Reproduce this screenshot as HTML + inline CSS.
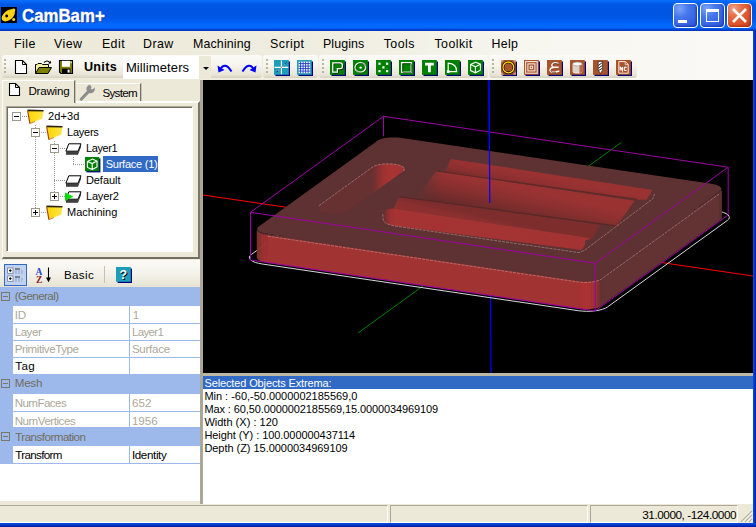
<!DOCTYPE html>
<html lang="en">
<head>
<meta charset="utf-8">
<title>CamBam+</title>
<style>
html,body{margin:0;padding:0}
body{width:756px;height:527px;position:relative;overflow:hidden;background:#ece9d8;
 font-family:"Liberation Sans",sans-serif;font-size:11px;color:#000}
.abs{position:absolute}
div,span{box-sizing:border-box}
.t{position:absolute;white-space:nowrap;line-height:1}
/* ---------- title bar ---------- */
#title{left:0;top:0;width:756px;height:31px;
 background:linear-gradient(to bottom,#0b6ffc 0%,#0869f8 5%,#035eec 10%,#0057e3 15%,#0056e2 40%,#0058e8 60%,#0060f3 70%,#0268fc 79%,#0267fa 89%,#0055e4 93%,#003ccc 96.5%,#0031bc 100%)}
#title .cap{left:22px;top:7px;font-size:18.2px;font-weight:bold;color:#fff;transform:scaleX(0.925);transform-origin:0 0;text-shadow:1px 1px 0 #0b2c8c;-webkit-text-stroke:0.35px #fff}
.cbtn{position:absolute;top:3px;width:25px;height:25px;border:1px solid #fff;border-radius:4px;background:radial-gradient(circle at 25% 20%,#7ea4f7 0%,#4577ec 35%,#3562e2 70%,#2a50d2 100%);box-shadow:inset -1px -1px 2px rgba(10,30,140,.55)}
.cbtn.close{background:radial-gradient(circle at 25% 20%,#f2a288 0%,#e46840 35%,#dc5028 70%,#c23a18 100%);box-shadow:inset -1px -1px 2px rgba(120,20,0,.5)}
/* ---------- menu ---------- */
#menu{left:0;top:31px;width:756px;height:24px;background:linear-gradient(to right,#ece9d8 0%,#efede0 40%,#f8f7f1 75%,#faf9f5 100%)}
#menu .t{top:7px;font-size:12.4px}
/* ---------- toolbar ---------- */
#tbrow{left:0;top:55px;width:756px;height:25px;background:linear-gradient(to right,#ece9d8 0%,#efede0 40%,#f8f7f1 75%,#faf9f5 100%)}
.strip{position:absolute;top:0;height:23px;border-radius:3px 3px 3px 3px;
 background:linear-gradient(to bottom,#fbfaf7 0%,#f6f4ec 45%,#e9e6d8 85%,#d6d2c0 100%)}
.grip{position:absolute;top:4px;width:2px;height:14px;
 background:repeating-linear-gradient(to bottom,#b9b5a3 0,#b9b5a3 2px,transparent 2px,transparent 4px)}
/* ---------- left panel ---------- */
#left{left:0;top:80px;width:200px;height:424px;background:#ece9d8}

/* tabs */
.tab{position:absolute;background:#ece9d8;border-top:1px solid #fff;border-right:1px solid #716f64;box-shadow:1px 0 0 #c9c5b3}
#tabpage{position:absolute;left:2px;top:21px;width:198px;height:158px;border-top:2px solid #fff;border-left:1px solid #fff;border-right:2px solid #7a776a;border-bottom:2px solid #716f64;background:#ece9d8}
#tree{position:absolute;left:6px;top:26px;width:187px;height:146px;background:#fff;border:1px solid;border-color:#aca899 #fff #fff #aca899;box-shadow:inset 1px 1px 0 #716f64}
#tree .t{font-size:11px}
.pm{position:absolute;width:9px;height:9px;border:1px solid #9d9a8b;background:#fff}
.pm:before{content:"";position:absolute;left:1px;top:3px;width:5px;height:1px;background:#000}
.pm.plus:after{content:"";position:absolute;left:3px;top:1px;width:1px;height:5px;background:#000}
.dv{position:absolute;width:1px;background:repeating-linear-gradient(to bottom,#9a9a9a 0,#9a9a9a 1px,transparent 1px,transparent 2px)}
.dh{position:absolute;height:1px;background:repeating-linear-gradient(to right,#9a9a9a 0,#9a9a9a 1px,transparent 1px,transparent 2px)}
/* property grid */
#pgtb{position:absolute;left:0;top:180px;width:200px;height:27px;background:linear-gradient(to bottom,#fbfaf7 0%,#f4f2ea 50%,#e6e3d3 100%)}
#pg{position:absolute;left:0;top:207px;width:200px;height:214px;background:#fff}
.cat{position:absolute;left:0;width:200px;background:#9db9eb}
.cat .t{left:15px;top:3px;font-size:11.6px;color:#706d5c}
.pmc{position:absolute;left:1px;top:5px;width:9px;height:9px;border:1px solid #7b7768}
.pmc:before{content:"";position:absolute;left:1px;top:3px;width:5px;height:1px;background:#7b7768}
.row{position:absolute;left:0;width:200px;background:#fff;border-left:13px solid #9db9eb;border-bottom:1px solid #9db9eb}
.row:after{content:"";position:absolute;left:116px;top:0;bottom:0;width:1px;background:#9db9eb}
.row .t{top:3px;font-size:11.6px}
.row .n{left:2px}.row .v{left:119px}
.row.dis .t{color:#aca899}
/* ---------- viewport ---------- */
#vsplit{left:200px;top:80px;width:3px;height:424px;background:#aaa698}
#view{left:203px;top:80px;width:550px;height:293px;background:#000;overflow:hidden}
#hsplit{left:203px;top:373px;width:550px;height:3px;background:#bcb8a6}
#info{left:203px;top:376px;width:550px;height:128px;background:#fff;font-size:11px}
#info .hd{position:absolute;left:0;top:0.4px;width:550px;height:12.4px;background:#316ac5}
#info .t{}
/* ---------- status ---------- */
#status{left:0;top:504px;width:756px;height:19px;background:#ece9d8}
.sp{position:absolute;top:1px;height:18px;border-top:1px solid #aca899;border-left:1px solid #aca899;border-right:1px solid #fff;border-bottom:1px solid #fff}
#bborder{left:0;top:523px;width:756px;height:4px;background:linear-gradient(to bottom,#0a4fe0,#0034c8 50%,#001e9c)}
#rborder{left:753px;top:31px;width:3px;height:492px;background:linear-gradient(to right,#0a4fe0,#0034c8 60%,#001e9c)}
</style>
</head>
<body>
<!-- TITLE -->
<div id="title" class="abs">
 <svg class="abs" style="left:1px;top:7px" width="16" height="16" viewBox="0 0 16 16"><rect width="16" height="16" fill="#000"/><ellipse cx="7.2" cy="8.4" rx="7.6" ry="4.6" transform="rotate(-40 7.2 8.4)" fill="#f7d417"/><path d="M9,3.4Q12.6,0.6 14.2,2.2Q14.6,5.4 11,8Z" fill="#f7d417"/><circle cx="5.7" cy="9" r="1.4" fill="#000"/><circle cx="12.7" cy="12.5" r="1.5" fill="#f7d417"/></svg>
 <div class="t cap">CamBam+</div>
 <div class="cbtn" style="left:673px"><div class="abs" style="left:4px;top:16px;width:9px;height:3px;background:#fff"></div></div>
 <div class="cbtn" style="left:700px"><div class="abs" style="left:5px;top:5px;width:13px;height:13px;border:1px solid #fff;border-top-width:3px"></div></div>
 <div class="cbtn close" style="left:727px"><svg class="abs" style="left:3px;top:3px" width="17" height="17" viewBox="0 0 17 17"><path d="M2,2L15,15M15,2L2,15" stroke="#fff" stroke-width="2.6"/></svg></div>
</div>
<!-- MENU -->
<div id="menu" class="abs">
 <span class="t" style="left:14.0px;letter-spacing:0.44px">File</span>
 <span class="t" style="left:54.0px;letter-spacing:0.45px">View</span>
 <span class="t" style="left:101.9px;letter-spacing:0.45px">Edit</span>
 <span class="t" style="left:143.0px;letter-spacing:0.45px">Draw</span>
 <span class="t" style="left:193.0px;letter-spacing:0.15px">Machining</span>
 <span class="t" style="left:270.1px;letter-spacing:0.45px">Script</span>
 <span class="t" style="left:323.0px;letter-spacing:0.11px">Plugins</span>
 <span class="t" style="left:383.7px;letter-spacing:0.45px">Tools</span>
 <span class="t" style="left:434.4px;letter-spacing:0.45px">Toolkit</span>
 <span class="t" style="left:491.5px;letter-spacing:0.27px">Help</span>
</div>
<!-- TOOLBAR -->
<div id="tbrow" class="abs">
 <div class="strip" style="left:2px;width:260px"></div>
 <div class="strip" style="left:263px;width:55px"></div>
 <div class="strip" style="left:319px;width:169px"></div>
 <div class="strip" style="left:489px;width:148px"></div>
 <div class="grip" style="left:4px"></div><div class="grip" style="left:266px"></div><div class="grip" style="left:322px"></div><div class="grip" style="left:492px"></div>
 <svg class="abs" style="left:14px;top:4px" width="14" height="16" viewBox="0 0 14 16"><path d="M1.5,1.5H8.5L12.5,5.5V14.5H1.5Z" fill="#fff" stroke="#000" stroke-width="1.1"/><path d="M8.5,1.5V5.5H12.5" fill="none" stroke="#000" stroke-width="1"/></svg>
 <svg class="abs" style="left:34px;top:3px" width="19" height="17" viewBox="0 0 19 17"><path d="M1.5,15.5V6.5H3L4,5.5H7.5L8.5,6.5H14.5V9" fill="#f2f0a0" stroke="#000" stroke-width="1"/><path d="M1.5,15.5L5,9.5H17.5L14,15.5Z" fill="#808000" stroke="#000" stroke-width="1"/><path d="M10,4.5Q13.5,1.5 16,4.8" fill="none" stroke="#000" stroke-width="1.1"/><path d="M14.2,5.6H17V2.8Z" fill="#000"/></svg>
 <svg class="abs" style="left:58px;top:4px" width="16" height="16" viewBox="0 0 16 16"><path d="M1.5,1.5H14.5V14.5H3L1.5,13Z" fill="#808000" stroke="#000" stroke-width="1.1"/><rect x="4" y="1.8" width="8" height="6" fill="#fff"/><rect x="4" y="9.6" width="8.4" height="4.8" fill="#000"/><rect x="9.6" y="10.6" width="2" height="3" fill="#fff"/><rect x="12.6" y="2.6" width="1.2" height="1.6" fill="#fff"/></svg>
 <span class="t" style="left:83.9px;top:6px;font-size:12.6px;font-weight:bold;letter-spacing:0.33px">Units</span>
 <div class="abs" style="left:123px;top:1px;width:76px;height:23px;background:#fff"></div>
 <span class="t" style="left:125.9px;top:6px;font-size:13px;letter-spacing:0.11px">Millimeters</span>
 <div class="abs" style="left:199px;top:1px;width:12px;height:23px;background:#ece9d8"></div>
 <div class="abs" style="left:203px;top:12px;width:0;height:0;border-left:3px solid transparent;border-right:3px solid transparent;border-top:3px solid #000"></div>
 <svg class="abs" style="left:216px;top:7px" width="18" height="12" viewBox="0 0 18 12"><path d="M4,7.5Q9,-1 15.5,9.5" fill="none" stroke="#0000ff" stroke-width="2"/><path d="M1.5,3.5L2.5,10.5L8.5,8Z" fill="#0000ff"/></svg>
 <svg class="abs" style="left:240px;top:7px" width="18" height="12" viewBox="0 0 18 12"><path d="M14,7.5Q9,-1 2.5,9.5" fill="none" stroke="#0000ff" stroke-width="2"/><path d="M16.5,3.5L15.5,10.5L9.5,8Z" fill="#0000ff"/></svg>
 <svg class="abs" style="left:274px;top:5px" width="17" height="17" viewBox="0 0 17 17"><rect x="1.5" y="1.5" width="14.5" height="14.5" fill="#00007a"/><rect x="0" y="0" width="14.8" height="14.8" fill="#1e9db8"/><path d="M7.4,0.5V14.3M0.5,7.4H14.3" stroke="#fff" stroke-width="1.1"/><path d="M2.5,12.3L12.3,2.5" stroke="#0a2a8a" stroke-width="1"/><path d="M7.4,7.4L11,3.8M3.8,11L7.4,7.4" stroke="#dff" stroke-width="0.6"/></svg>
 <svg class="abs" style="left:297px;top:5px" width="17" height="17" viewBox="0 0 17 17"><rect x="1.5" y="1.5" width="14.5" height="14.5" fill="#00007a"/><rect x="0" y="0" width="14.8" height="14.8" fill="#1e9db8"/><rect x="1.6" y="1.6" width="11.6" height="11.6" fill="#fff"/><path d="M3.6,1.5V13.3M6.1,1.5V13.3M8.6,1.5V13.3M11.1,1.5V13.3M1.5,3.6H13.3M1.5,6.1H13.3M1.5,8.6H13.3M1.5,11.1H13.3" stroke="#1030c0" stroke-width="0.85"/></svg>
 <svg class="abs" style="left:330px;top:5px" width="17" height="17" viewBox="0 0 17 17"><rect x="1.5" y="1.5" width="14.5" height="14.5" fill="#00007a"/><rect x="0" y="0" width="14.8" height="14.8" fill="#008000"/><path d="M3.6,3.6H11Q13.1,3.6 13.1,5.8V8Q13.1,9.4 11.4,9.4H8.2V13H3.6Z" fill="none" stroke="#000" stroke-width="0.9"/><path d="M2.8,2.8H10.2Q12.3,2.8 12.3,5V7.2Q12.3,8.6 10.6,8.6H7.4V12.2H2.8Z" fill="none" stroke="#fff" stroke-width="1.3"/></svg>
 <svg class="abs" style="left:353px;top:5px" width="17" height="17" viewBox="0 0 17 17"><rect x="1.5" y="1.5" width="14.5" height="14.5" fill="#00007a"/><rect x="0" y="0" width="14.8" height="14.8" fill="#008000"/><ellipse cx="7.4" cy="7.4" rx="5.3" ry="4.8" fill="none" stroke="#fff" stroke-width="1.3"/><ellipse cx="7.4" cy="7.4" rx="5.3" ry="4.8" fill="none" stroke="#000" stroke-width="0.4" transform="translate(0.7,0.7)"/><circle cx="7.6" cy="7.6" r="1.2" fill="#fff"/></svg>
 <svg class="abs" style="left:376px;top:5px" width="17" height="17" viewBox="0 0 17 17"><rect x="1.5" y="1.5" width="14.5" height="14.5" fill="#00007a"/><rect x="0" y="0" width="14.8" height="14.8" fill="#008000"/><g fill="#fff"><rect x="2.4" y="2.6" width="2.2" height="2.2"/><rect x="10" y="2.6" width="2.2" height="2.2"/><rect x="6.3" y="6.3" width="2.2" height="2.2"/><rect x="2.4" y="10" width="2.2" height="2.2"/><rect x="10" y="10" width="2.2" height="2.2"/></g></svg>
 <svg class="abs" style="left:399px;top:5px" width="17" height="17" viewBox="0 0 17 17"><rect x="1.5" y="1.5" width="14.5" height="14.5" fill="#00007a"/><rect x="0" y="0" width="14.8" height="14.8" fill="#008000"/><rect x="2.6" y="2.6" width="9.6" height="9.6" fill="none" stroke="#fff" stroke-width="1.3"/><rect x="3.9" y="3.9" width="8.3" height="8.3" fill="none" stroke="#000" stroke-width="0.5"/></svg>
 <svg class="abs" style="left:422px;top:5px" width="17" height="17" viewBox="0 0 17 17"><rect x="1.5" y="1.5" width="14.5" height="14.5" fill="#00007a"/><rect x="0" y="0" width="14.8" height="14.8" fill="#008000"/><path d="M3,2.8H11.8V5.4H8.8V12.3H6V5.4H3Z" fill="#fff"/></svg>
 <svg class="abs" style="left:445px;top:5px" width="17" height="17" viewBox="0 0 17 17"><rect x="1.5" y="1.5" width="14.5" height="14.5" fill="#00007a"/><rect x="0" y="0" width="14.8" height="14.8" fill="#008000"/><path d="M3.2,11.6V3.2Q11.6,3.6 11.6,11.6Z" fill="none" stroke="#fff" stroke-width="1.2"/><rect x="1.8" y="10.2" width="2.8" height="2.8" fill="#fff"/></svg>
 <svg class="abs" style="left:468px;top:5px" width="17" height="17" viewBox="0 0 17 17"><rect x="1.5" y="1.5" width="14.5" height="14.5" fill="#00007a"/><rect x="0" y="0" width="14.8" height="14.8" fill="#008000"/><path d="M2.6,4.6L7.6,2.2L12.4,4.2V10.2L7.4,12.8L2.6,10.6ZM2.6,4.6L7.4,6.8L12.4,4.2M7.4,6.8V12.8" fill="none" stroke="#fff" stroke-width="1.1"/></svg>
 <svg class="abs" style="left:501px;top:5px" width="17" height="17" viewBox="0 0 17 17"><rect x="1.5" y="1.5" width="14.5" height="14.5" fill="#00007a"/><rect x="0" y="0" width="14.8" height="14.8" fill="#a8532b"/><path d="M0,0L3,0L0,3ZM14.8,0L11.8,0L14.8,3ZM0,14.8L3,14.8L0,11.8ZM14.8,14.8L11.8,14.8L14.8,11.8Z" fill="#f4e8d8" opacity="0.55"/><circle cx="7.4" cy="7.4" r="5.4" fill="none" stroke="#000" stroke-width="2.6"/><circle cx="7.4" cy="7.4" r="5.4" fill="none" stroke="#ffd800" stroke-width="1.3"/></svg>
 <svg class="abs" style="left:524px;top:5px" width="17" height="17" viewBox="0 0 17 17"><rect x="1.5" y="1.5" width="14.5" height="14.5" fill="#00007a"/><rect x="0" y="0" width="14.8" height="14.8" fill="#a8532b"/><rect x="1.6" y="1.6" width="11.6" height="11.6" fill="none" stroke="#f6e9dc" stroke-width="1.1"/><rect x="3.9" y="3.9" width="7" height="7" fill="none" stroke="#f6e9dc" stroke-width="1.1"/><rect x="6.2" y="6.2" width="2.4" height="2.4" fill="none" stroke="#f6e9dc" stroke-width="1"/></svg>
 <svg class="abs" style="left:547px;top:5px" width="17" height="17" viewBox="0 0 17 17"><rect x="1.5" y="1.5" width="14.5" height="14.5" fill="#00007a"/><rect x="0" y="0" width="14.8" height="14.8" fill="#a8532b"/><path d="M11.6,3.6Q7,1.6 5,4.4Q4,7 8,7.2H11.6M8,7.2Q2.6,7.6 3,10.4Q4,13 8.6,12Q11,11 12.4,11.4" fill="none" stroke="#fff" stroke-width="1.4"/><path d="M11.9,4.2Q7.4,2.4 5.6,4.8M3.6,10.8Q4.6,13.2 9,12.5" fill="none" stroke="#000" stroke-width="0.5"/></svg>
 <svg class="abs" style="left:570px;top:5px" width="17" height="17" viewBox="0 0 17 17"><rect x="1.5" y="1.5" width="14.5" height="14.5" fill="#00007a"/><rect x="0" y="0" width="14.8" height="14.8" fill="#a8532b"/><path d="M2.6,4V11.4Q2.6,13.4 7.4,13.4Q12.2,13.4 12.2,11.4V4Z" fill="#e9e4dc"/><ellipse cx="7.4" cy="4" rx="4.8" ry="2" fill="#fbfaf6" stroke="#8a8a8a" stroke-width="0.6"/><path d="M9.4,5.6V13.1Q12.2,12.8 12.2,11.4V4.6Q11.6,5.4 9.4,5.6Z" fill="#b9674a"/><path d="M3,7H9M3,9H9M3,11H9" stroke="#b8b2a6" stroke-width="0.6"/></svg>
 <svg class="abs" style="left:593px;top:5px" width="17" height="17" viewBox="0 0 17 17"><rect x="1.5" y="1.5" width="14.5" height="14.5" fill="#00007a"/><rect x="0" y="0" width="14.8" height="14.8" fill="#a8532b"/><path d="M5.2,1.4H9.6V10L7.4,13.6L5.2,10Z" fill="#fff" stroke="#222" stroke-width="0.7"/><path d="M5.4,5.4L9.4,2.6M5.4,8.2L9.4,5.4M5.6,10.6L9.4,8.2" stroke="#222" stroke-width="1"/></svg>
 <svg class="abs" style="left:616px;top:5px" width="17" height="17" viewBox="0 0 17 17"><rect x="1.5" y="1.5" width="14.5" height="14.5" fill="#00007a"/><rect x="0" y="0" width="14.8" height="14.8" fill="#a8532b"/><path d="M2.8,1.6H9.4L12.2,4.4V13.2H2.8Z" fill="none" stroke="#f6e9dc" stroke-width="1"/><path d="M9.2,1.8V4.6H12" fill="none" stroke="#f6e9dc" stroke-width="0.8"/><path d="M4.2,10.6V7H4.4L6.4,10.6V7M10.6,7.4Q8.2,6.4 8.2,8.8Q8.2,11.2 10.6,10.2" fill="none" stroke="#fff" stroke-width="1.1"/></svg>
</div>
<!-- LEFT -->
<div id="left" class="abs">
 <div id="tabpage"></div>
 <div class="tab" style="left:2px;top:0;width:73px;height:23px;border-left:1px solid #fff"></div>
 <div class="tab" style="left:76px;top:3px;width:65px;height:18px"></div>
 <svg class="abs" style="left:8px;top:2px" width="13" height="15" viewBox="0 0 13 15"><path d="M1.5,1.5H7.5L11.5,5.5V13.5H1.5Z" fill="#fff" stroke="#000" stroke-width="1.1"/><path d="M7.5,1.5V5.5H11.5" fill="none" stroke="#000" stroke-width="1"/></svg>
 <svg class="abs" style="left:79px;top:4px" width="17" height="17" viewBox="0 0 17 17"><path d="M2.2,15.2L9.4,7.6" stroke="#8d8d8d" stroke-width="3" stroke-linecap="round"/><path d="M15.4,3.2A4.2,4.2 0 1 1 11.2,0.8L12.6,3.4L11.6,5L14,5.2Z" fill="#8d8d8d"/></svg>
 <span class="t" style="left:28.4px;top:5px;font-size:11.6px;letter-spacing:-0.21px">Drawing</span>
 <span class="t" style="left:102.4px;top:7px;font-size:11.6px;letter-spacing:-0.67px">System</span>
 <div id="tree">
  <div class="dv" style="left:28px;top:18px;height:90px"></div>
  <div class="dv" style="left:47px;top:34px;height:58px"></div>
  <div class="dv" style="left:66px;top:50px;height:8px"></div>
  <div class="dh" style="left:15px;top:9px;width:8px"></div>
  <div class="dh" style="left:34px;top:25px;width:8px"></div>
  <div class="dh" style="left:53px;top:41px;width:8px"></div>
  <div class="dh" style="left:66px;top:57px;width:12px"></div>
  <div class="dh" style="left:47px;top:73px;width:12px"></div>
  <div class="dh" style="left:53px;top:89px;width:6px"></div>
  <div class="dh" style="left:34px;top:105px;width:8px"></div>
  <svg class="abs" style="left:20px;top:2px" width="17" height="16" viewBox="0 0 17 16"><defs><linearGradient id="fg1" x1="0" x2="1"><stop offset="0" stop-color="#ffd400"/><stop offset="1" stop-color="#ffe64a"/></linearGradient></defs><path d="M0.6,1.2L16.4,1.8L15.4,9.6L2.8,14.6Z" fill="url(#fg1)"/><path d="M0.4,0.4L16.6,1L16.4,2.6L0.6,2.2Z" fill="#2a2410"/><path d="M0.7,2L2.9,14.6" stroke="#a83a10" stroke-width="1.1" fill="none"/><path d="M2.8,14.6L8,12.6" stroke="#c86a20" stroke-width="0.8" fill="none"/></svg><svg class="abs" style="left:39px;top:18px" width="17" height="16" viewBox="0 0 17 16"><defs><linearGradient id="fg2" x1="0" x2="1"><stop offset="0" stop-color="#ffd400"/><stop offset="1" stop-color="#ffe64a"/></linearGradient></defs><path d="M0.6,1.2L16.4,1.8L15.4,9.6L2.8,14.6Z" fill="url(#fg2)"/><path d="M0.4,0.4L16.6,1L16.4,2.6L0.6,2.2Z" fill="#2a2410"/><path d="M0.7,2L2.9,14.6" stroke="#a83a10" stroke-width="1.1" fill="none"/><path d="M2.8,14.6L8,12.6" stroke="#c86a20" stroke-width="0.8" fill="none"/></svg><svg class="abs" style="left:58px;top:36px" width="17" height="13" viewBox="0 0 17 13"><path d="M1,8.4H13V11.8H1Z" fill="#404040"/><path d="M13,8.4L16,1V4L13,11.8Z" fill="#404040"/><path d="M3.8,0.8H16L13,8.2H0.9Z" fill="#fff" stroke="#000" stroke-width="1"/></svg><svg class="abs" style="left:78px;top:50px" width="16" height="16" viewBox="0 0 16 16"><rect x="1.4" y="1.4" width="14" height="14" fill="#00007a"/><rect width="14.2" height="14.2" fill="#008000"/><path d="M2.4,4.4L7.4,2L12,4V10L7.2,12.6L2.4,10.4ZM2.4,4.4L7.2,6.6L12,4M7.2,6.6V12.6" fill="none" stroke="#fff" stroke-width="1.1"/></svg><svg class="abs" style="left:58px;top:68px" width="17" height="13" viewBox="0 0 17 13"><path d="M1,8.4H13V11.8H1Z" fill="#404040"/><path d="M13,8.4L16,1V4L13,11.8Z" fill="#404040"/><path d="M3.8,0.8H16L13,8.2H0.9Z" fill="#fff" stroke="#000" stroke-width="1"/></svg><svg class="abs" style="left:58px;top:84px" width="17" height="13" viewBox="0 0 17 13"><path d="M1,8.4H13V11.8H1Z" fill="#404040"/><path d="M13,8.4L16,1V4L13,11.8Z" fill="#404040"/><path d="M3.8,0.8H16L13,8.2H0.9Z" fill="#fff" stroke="#000" stroke-width="1"/><path d="M0,1.4L8.4,5.6L0,10Z" fill="#00e000"/></svg><svg class="abs" style="left:39px;top:98px" width="17" height="16" viewBox="0 0 17 16"><defs><linearGradient id="fg3" x1="0" x2="1"><stop offset="0" stop-color="#ffd400"/><stop offset="1" stop-color="#ffe64a"/></linearGradient></defs><path d="M0.6,1.2L16.4,1.8L15.4,9.6L2.8,14.6Z" fill="url(#fg3)"/><path d="M0.4,0.4L16.6,1L16.4,2.6L0.6,2.2Z" fill="#2a2410"/><path d="M0.7,2L2.9,14.6" stroke="#a83a10" stroke-width="1.1" fill="none"/><path d="M2.8,14.6L8,12.6" stroke="#c86a20" stroke-width="0.8" fill="none"/></svg>
  <div class="pm" style="left:5px;top:5px"></div>
  <div class="pm" style="left:24px;top:21px"></div>
  <div class="pm" style="left:43px;top:37px"></div>
  <div class="pm plus" style="left:43px;top:85px"></div>
  <div class="pm plus" style="left:24px;top:101px"></div>
  <span class="t" style="left:41.1px;top:4px;letter-spacing:0.07px">2d+3d</span>
  <span class="t" style="left:60.1px;top:20px;letter-spacing:-0.25px">Layers</span>
  <span class="t" style="left:79.1px;top:36px;letter-spacing:-0.41px">Layer1</span>
  <div class="abs" style="left:96px;top:49px;width:55px;height:16px;background:#316ac5"></div>
  <span class="t" style="left:98.7px;top:52px;color:#fff;letter-spacing:-0.24px">Surface (1)</span>
  <span class="t" style="left:78.9px;top:68px;letter-spacing:-0.04px">Default</span>
  <span class="t" style="left:78.9px;top:84px;letter-spacing:-0.13px">Layer2</span>
  <span class="t" style="left:60.0px;top:100px;letter-spacing:0.02px">Machining</span>
 </div>
 <div id="pgtb">
  <div class="abs" style="left:4px;top:4px;width:23px;height:22px;background:#c1d2ee;border:1px solid #316ac5"></div>
  <svg class="abs" style="left:7px;top:7px" width="18" height="16" viewBox="0 0 18 16"><g fill="#fff" stroke="#6a7a9a" stroke-width="0.8"><rect x="0.6" y="0.9" width="5.4" height="5.4"/><rect x="0.6" y="8.9" width="5.4" height="5.4"/></g><path d="M2,3.6H4.6M3.3,2.3V4.9M2,11.6H4.6M3.3,10.3V12.9" stroke="#000" stroke-width="1"/><path d="M8,2H13M8,10H13" stroke="#333" stroke-width="1"/><path d="M8,4H17M8,6H17M8,12H17M8,14H15" stroke="#8a9ac0" stroke-width="0.9" stroke-dasharray="2 1"/></svg>
  <svg class="abs" style="left:34px;top:6px" width="20" height="18" viewBox="0 0 20 18"><text x="1.5" y="8.6" font-family="Liberation Serif,serif" font-weight="bold" font-size="9.5" fill="#2a46c8">A</text><text x="2" y="16.6" font-family="Liberation Serif,serif" font-weight="bold" font-size="9.5" fill="#8c1a2a">Z</text><path d="M14.5,1.5V14" stroke="#000" stroke-width="1.1"/><path d="M12,11.6H17L14.5,16.2Z" fill="#000"/></svg>
  <svg class="abs" style="left:116px;top:7px" width="17" height="17" viewBox="0 0 17 17"><rect x="1.6" y="1.6" width="14.4" height="14.4" fill="#00007a"/><rect width="14.8" height="14.8" fill="#1e9db8"/><text x="4.6" y="13" font-family="Liberation Sans,sans-serif" font-weight="bold" font-size="12.5" fill="#000">?</text><text x="3.6" y="12.2" font-family="Liberation Sans,sans-serif" font-weight="bold" font-size="12.5" fill="#fff">?</text></svg>
  <span class="t" style="left:64.0px;top:9px;font-size:11.6px;letter-spacing:0.34px">Basic</span>
  <div class="abs" style="left:104px;top:6px;width:1px;height:17px;background:#c5c2b2"></div>
 </div>
 <div id="pg">
  <div class="cat" style="top:0;height:19px"><div class="pmc"></div><span class="t" style="left:14.7px;letter-spacing:-0.58px">(General)</span></div>
  <div class="row dis" style="top:19px;height:18px"><span class="t n" style="left:1.7px;letter-spacing:-0.09px">ID</span><span class="t v" style="left:119.7px;letter-spacing:0.00px">1</span></div>
  <div class="row dis" style="top:37px;height:16.5px"><span class="t n" style="left:1.7px;top:2.0px;letter-spacing:-0.48px">Layer</span><span class="t v" style="left:118.9px;top:2px;letter-spacing:-0.70px">Layer1</span></div>
  <div class="row dis" style="top:53.5px;height:17.5px"><span class="t n" style="left:1.7px;top:2.2px;letter-spacing:-0.44px">PrimitiveType</span><span class="t v" style="left:118.9px;top:2.2px;letter-spacing:-0.29px">Surface</span></div>
  <div class="row" style="top:71px;height:17px"><span class="t n" style="left:2.2px;top:1.8px;letter-spacing:0.45px">Tag</span></div>
  <div class="cat" style="top:88px;height:18.5px"><div class="pmc" style="top:4px"></div><span class="t" style="left:14.7px;top:2px;letter-spacing:-0.22px">Mesh</span></div>
  <div class="row dis" style="top:106.5px;height:18px"><span class="t n" style="left:1.7px;letter-spacing:-0.57px">NumFaces</span><span class="t v" style="left:118.9px;letter-spacing:0.13px">652</span></div>
  <div class="row dis" style="top:124.5px;height:16.7px"><span class="t n" style="left:1.7px;letter-spacing:-0.47px">NumVertices</span><span class="t v" style="left:118.9px;letter-spacing:0.00px">1956</span></div>
  <div class="cat" style="top:141.2px;height:17.8px"><div class="pmc" style="top:4px"></div><span class="t" style="left:15.2px;letter-spacing:-0.52px">Transformation</span></div>
  <div class="row" style="top:159px;height:17.8px"><span class="t n" style="left:2.2px;letter-spacing:-0.65px">Transform</span><span class="t v" style="left:118.9px;letter-spacing:-0.36px">Identity</span></div>
 </div>
</div>
<!-- VIEWPORT -->
<div id="vsplit" class="abs"></div>
<div id="view" class="abs"><!--VIEW--><svg width="550" height="293" viewBox="203 80 550 293" shape-rendering="auto">
<polyline points="203.0,195.0 753.0,276.0" fill="none" stroke="#ff0000" stroke-width="1"/>
<polyline points="358.0,333.0 621.5,142.3" fill="none" stroke="#008000" stroke-width="1"/>
<polyline points="488.9,80.0 491.1,373.0" fill="none" stroke="#0000ff" stroke-width="1.2"/>
<polygon points="578.2,310.7 582.3,311.1 586.6,311.3 590.9,311.2 595.1,310.8 599.0,310.2 602.5,309.3 605.4,308.2 607.6,306.9 727.3,220.5 728.7,219.2 729.3,217.8 729.1,216.3 728.0,214.9 726.1,213.6 723.5,212.5 720.2,211.6 716.5,210.9 400.5,164.2 396.4,163.8 392.1,163.6 387.8,163.7 383.6,164.1 379.7,164.7 376.2,165.6 373.3,166.7 371.1,168.0 251.4,254.4 250.0,255.7 249.4,257.1 249.6,258.6 250.7,260.0 252.6,261.3 255.2,262.4 258.5,263.3 262.2,264.0" fill="none" stroke="#d8d8d8" stroke-width="1"/>
<polygon points="578.5,308.4 580.6,308.7 582.8,308.9 585.0,308.9 587.3,308.9 589.5,308.8 591.6,308.5 593.7,308.2 595.6,307.8 597.3,307.4 598.8,306.8 600.2,306.2 601.2,305.5 719.9,219.9 720.7,219.2 721.2,218.5 721.4,217.8 721.4,217.0 721.0,216.3 720.4,215.6 719.5,214.9 718.3,214.3 716.9,213.7 715.3,213.2 713.5,212.8 711.5,212.4 400.2,166.5 398.1,166.2 395.9,166.0 393.7,166.0 391.4,166.0 389.2,166.1 387.1,166.4 385.0,166.7 383.1,167.1 381.4,167.5 379.9,168.1 378.5,168.7 377.5,169.4 258.8,255.0 258.0,255.7 257.5,256.4 257.3,257.1 257.3,257.9 257.7,258.6 258.3,259.3 259.2,260.0 260.4,260.6 261.8,261.2 263.4,261.7 265.2,262.1 267.2,262.5" fill="#5e3232" />
<polygon points="578.5,283.0 580.6,283.3 580.6,280.1 578.5,279.8" fill="#5e3232" />
<polygon points="578.5,308.4 580.6,308.7 580.6,281.8 578.5,281.6" fill="#a63333" stroke="#a63333" stroke-width="0.6"/>
<polygon points="580.6,283.3 582.8,283.4 582.8,280.2 580.6,280.1" fill="#5e3232" />
<polygon points="580.6,308.7 582.8,308.9 582.8,282.0 580.6,281.8" fill="#ab3333" stroke="#ab3333" stroke-width="0.6"/>
<polygon points="582.8,283.4 585.0,283.5 585.0,280.3 582.8,280.2" fill="#5e3232" />
<polygon points="582.8,308.9 585.0,308.9 585.0,282.1 582.8,282.0" fill="#ad3333" stroke="#ad3333" stroke-width="0.6"/>
<polygon points="585.0,283.5 587.3,283.5 587.3,280.3 585.0,280.3" fill="#5e3232" />
<polygon points="585.0,308.9 587.3,308.9 587.3,282.0 585.0,282.1" fill="#ad3333" stroke="#ad3333" stroke-width="0.6"/>
<polygon points="587.3,283.5 589.5,283.3 589.5,280.1 587.3,280.3" fill="#5e3232" />
<polygon points="587.3,308.9 589.5,308.8 589.5,281.9 587.3,282.0" fill="#ad3333" stroke="#ad3333" stroke-width="0.6"/>
<polygon points="589.5,283.3 591.6,283.1 591.6,279.9 589.5,280.1" fill="#5e3232" />
<polygon points="589.5,308.8 591.6,308.5 591.6,281.7 589.5,281.9" fill="#a93333" stroke="#a93333" stroke-width="0.6"/>
<polygon points="591.6,283.1 593.7,282.8 593.7,279.6 591.6,279.9" fill="#5e3232" />
<polygon points="591.6,308.5 593.7,308.2 593.7,281.4 591.6,281.7" fill="#a33333" stroke="#a33333" stroke-width="0.6"/>
<polygon points="593.7,282.8 595.6,282.4 595.6,279.2 593.7,279.6" fill="#5e3232" />
<polygon points="593.7,308.2 595.6,307.8 595.6,281.0 593.7,281.4" fill="#9b3333" stroke="#9b3333" stroke-width="0.6"/>
<polygon points="595.6,282.4 597.3,281.9 597.3,278.7 595.6,279.2" fill="#5e3232" />
<polygon points="595.6,307.8 597.3,307.4 597.3,280.5 595.6,281.0" fill="#923333" stroke="#923333" stroke-width="0.6"/>
<polygon points="597.3,281.9 598.8,281.4 598.8,278.2 597.3,278.7" fill="#5e3232" />
<polygon points="597.3,307.4 598.8,306.8 598.8,279.9 597.3,280.5" fill="#863333" stroke="#863333" stroke-width="0.6"/>
<polygon points="598.8,281.4 600.2,280.8 600.2,277.6 598.8,278.2" fill="#5e3232" />
<polygon points="598.8,306.8 600.2,306.2 600.2,279.3 598.8,279.9" fill="#793232" stroke="#793232" stroke-width="0.6"/>
<polygon points="600.2,280.8 601.2,280.1 601.2,276.9 600.2,277.6" fill="#5e3232" />
<polygon points="600.2,306.2 601.2,305.5 601.2,278.7 600.2,279.3" fill="#6b3232" stroke="#6b3232" stroke-width="0.6"/>
<polygon points="601.2,280.1 719.9,194.5 719.9,191.3 601.2,276.9" fill="#5e3232" />
<polygon points="601.2,305.5 719.9,219.9 719.9,193.0 601.2,278.7" fill="#633232" stroke="#633232" stroke-width="0.6"/>
<polygon points="719.9,194.5 720.7,193.8 720.7,190.6 719.9,191.3" fill="#5e3232" />
<polygon points="719.9,219.9 720.7,219.2 720.7,192.3 719.9,193.0" fill="#5e3232" stroke="#5e3232" stroke-width="0.6"/>
<polygon points="720.7,193.8 721.2,193.1 721.2,189.9 720.7,190.6" fill="#5e3232" />
<polygon points="720.7,219.2 721.2,218.5 721.2,191.6 720.7,192.3" fill="#5e3232" stroke="#5e3232" stroke-width="0.6"/>
<polygon points="721.2,193.1 721.4,192.3 721.4,189.1 721.2,189.9" fill="#5e3232" />
<polygon points="721.2,218.5 721.4,217.8 721.4,190.9 721.2,191.6" fill="#5e3232" stroke="#5e3232" stroke-width="0.6"/>
<polygon points="257.3,231.7 257.3,232.4 257.3,229.3 257.3,228.5" fill="#5e3232" />
<polygon points="257.3,257.1 257.3,257.9 257.3,231.0 257.3,230.3" fill="#663232" stroke="#663232" stroke-width="0.6"/>
<polygon points="257.3,232.4 257.7,233.2 257.7,230.0 257.3,229.3" fill="#5e3232" />
<polygon points="257.3,257.9 257.7,258.6 257.7,231.7 257.3,231.0" fill="#763232" stroke="#763232" stroke-width="0.6"/>
<polygon points="257.7,233.2 258.3,233.9 258.3,230.7 257.7,230.0" fill="#5e3232" />
<polygon points="257.7,258.6 258.3,259.3 258.3,232.5 257.7,231.7" fill="#803232" stroke="#803232" stroke-width="0.6"/>
<polygon points="258.3,233.9 259.2,234.6 259.2,231.4 258.3,230.7" fill="#5e3232" />
<polygon points="258.3,259.3 259.2,260.0 259.2,233.1 258.3,232.5" fill="#883333" stroke="#883333" stroke-width="0.6"/>
<polygon points="259.2,234.6 260.4,235.2 260.4,232.0 259.2,231.4" fill="#5e3232" />
<polygon points="259.2,260.0 260.4,260.6 260.4,233.7 259.2,233.1" fill="#8f3333" stroke="#8f3333" stroke-width="0.6"/>
<polygon points="260.4,235.2 261.8,235.7 261.8,232.6 260.4,232.0" fill="#5e3232" />
<polygon points="260.4,260.6 261.8,261.2 261.8,234.3 260.4,233.7" fill="#953333" stroke="#953333" stroke-width="0.6"/>
<polygon points="261.8,235.7 263.4,236.3 263.4,233.1 261.8,232.6" fill="#5e3232" />
<polygon points="261.8,261.2 263.4,261.7 263.4,234.8 261.8,234.3" fill="#9a3333" stroke="#9a3333" stroke-width="0.6"/>
<polygon points="263.4,236.3 265.2,236.7 265.2,233.5 263.4,233.1" fill="#5e3232" />
<polygon points="263.4,261.7 265.2,262.1 265.2,235.2 263.4,234.8" fill="#9e3333" stroke="#9e3333" stroke-width="0.6"/>
<polygon points="265.2,236.7 267.2,237.0 267.2,233.8 265.2,233.5" fill="#5e3232" />
<polygon points="265.2,262.1 267.2,262.5 267.2,235.6 265.2,235.2" fill="#a13333" stroke="#a13333" stroke-width="0.6"/>
<polygon points="267.2,237.0 578.5,283.0 578.5,279.8 267.2,233.8" fill="#5e3232" />
<polygon points="267.2,262.5 578.5,308.4 578.5,281.6 267.2,235.6" fill="#a23333" stroke="#a23333" stroke-width="0.6"/>
<polygon points="578.5,279.8 580.6,280.1 582.8,280.2 585.0,280.3 587.3,280.3 589.5,280.1 591.6,279.9 593.7,279.6 595.6,279.2 597.3,278.7 598.8,278.2 600.2,277.6 601.2,276.9 719.9,191.3 720.7,190.6 721.2,189.9 721.4,189.1 721.4,188.4 721.0,187.7 720.4,187.0 719.5,186.3 718.3,185.7 716.9,185.1 715.3,184.6 713.5,184.2 711.5,183.8 400.2,137.8 398.1,137.6 395.9,137.4 393.7,137.4 391.4,137.4 389.2,137.5 387.1,137.7 385.0,138.1 383.1,138.4 381.4,138.9 379.9,139.5 378.5,140.1 377.5,140.7 258.8,226.4 258.0,227.1 257.5,227.8 257.3,228.5 257.3,229.3 257.7,230.0 258.3,230.7 259.2,231.4 260.4,232.0 261.8,232.6 263.4,233.1 265.2,233.5 267.2,233.8" fill="#5e3232" />
<clipPath id="ctop"><polygon points="578.5,279.8 580.6,280.1 582.8,280.2 585.0,280.3 587.3,280.3 589.5,280.1 591.6,279.9 593.7,279.6 595.6,279.2 597.3,278.7 598.8,278.2 600.2,277.6 601.2,276.9 719.9,191.3 720.7,190.6 721.2,189.9 721.4,189.1 721.4,188.4 721.0,187.7 720.4,187.0 719.5,186.3 718.3,185.7 716.9,185.1 715.3,184.6 713.5,184.2 711.5,183.8 400.2,137.8 398.1,137.6 395.9,137.4 393.7,137.4 391.4,137.4 389.2,137.5 387.1,137.7 385.0,138.1 383.1,138.4 381.4,138.9 379.9,139.5 378.5,140.1 377.5,140.7 258.8,226.4 258.0,227.1 257.5,227.8 257.3,228.5 257.3,229.3 257.7,230.0 258.3,230.7 259.2,231.4 260.4,232.0 261.8,232.6 263.4,233.1 265.2,233.5 267.2,233.8"/></clipPath>
<clipPath id="cslot"><polygon points="327.0,213.2 329.0,213.4 331.1,213.6 333.3,213.7 335.5,213.6 337.7,213.5 339.8,213.3 341.8,213.0 343.6,212.6 345.3,212.1 346.8,211.6 348.1,211.0 349.2,210.3 402.9,171.5 403.7,170.9 404.2,170.2 404.5,169.4 404.4,168.7 404.1,168.0 403.5,167.3 402.6,166.6 401.4,166.0 400.1,165.5 398.5,165.0 396.7,164.6 394.8,164.2 394.7,164.2 392.7,164.0 390.6,163.8 388.4,163.7 386.2,163.8 384.0,163.9 381.9,164.1 379.9,164.4 378.1,164.8 376.3,165.3 374.8,165.8 373.5,166.4 372.5,167.0 318.7,205.9 318.0,206.5 317.4,207.2 317.2,208.0 317.3,208.7 317.6,209.4 318.2,210.1 319.1,210.8 320.2,211.4 321.6,211.9 323.2,212.4 325.0,212.8 326.9,213.2"/></clipPath>
<g clip-path="url(#cslot)">
<polygon points="327.0,213.2 329.0,213.4 331.1,213.6 333.3,213.7 335.5,213.6 337.7,213.5 339.8,213.3 341.8,213.0 343.6,212.6 345.3,212.1 346.8,211.6 348.1,211.0 349.2,210.3 402.9,171.5 403.7,170.9 404.2,170.2 404.5,169.4 404.4,168.7 404.1,168.0 403.5,167.3 402.6,166.6 401.4,166.0 400.1,165.5 398.5,165.0 396.7,164.6 394.8,164.2 394.7,164.2 392.7,164.0 390.6,163.8 388.4,163.7 386.2,163.8 384.0,163.9 381.9,164.1 379.9,164.4 378.1,164.8 376.3,165.3 374.8,165.8 373.5,166.4 372.5,167.0 318.7,205.9 318.0,206.5 317.4,207.2 317.2,208.0 317.3,208.7 317.6,209.4 318.2,210.1 319.1,210.8 320.2,211.4 321.6,211.9 323.2,212.4 325.0,212.8 326.9,213.2" fill="#673131" />
<linearGradient id="gs" gradientUnits="userSpaceOnUse" x1="372.5" y1="0" x2="404.4" y2="0"><stop offset="0" stop-color="#6c3030"/><stop offset="0.12" stop-color="#7e2f2f"/><stop offset="0.35" stop-color="#a03232"/><stop offset="0.6" stop-color="#aa3434"/><stop offset="1" stop-color="#a13333"/></linearGradient>
<rect x="372.5" y="150" width="34.9" height="70" fill="url(#gs)"/>
</g>
<linearGradient id="gA" gradientUnits="userSpaceOnUse" x1="452.0" y1="158.0" x2="449.0" y2="173.0"><stop offset="0" stop-color="#9b3232"/><stop offset="0.6" stop-color="#8c2f2f"/><stop offset="1" stop-color="#742c2c"/></linearGradient>
<polygon points="450.8,158.9 652.5,190.0 646.5,199.8 636.9,199.7 445.0,172.4" fill="url(#gA)" />
<linearGradient id="gB" gradientUnits="userSpaceOnUse" x1="436.0" y1="171.0" x2="430.0" y2="199.0"><stop offset="0" stop-color="#9a3232"/><stop offset="0.35" stop-color="#8d3030"/><stop offset="0.75" stop-color="#772c2c"/><stop offset="1" stop-color="#662b2b"/></linearGradient>
<polygon points="436.3,171.0 634.5,200.8 616.5,226.2 410.0,198.4 421.8,191.1" fill="url(#gB)" />
<linearGradient id="gBf" gradientUnits="userSpaceOnUse" x1="412.0" y1="190.0" x2="440.0" y2="194.0"><stop offset="0" stop-color="#5e3232" stop-opacity="1"/><stop offset="1" stop-color="#5e3232" stop-opacity="0"/></linearGradient>
<polygon points="436.3,171.0 470.0,176.0 450.0,204.0 410.0,198.4 421.8,191.1" fill="url(#gBf)" />
<linearGradient id="gC" gradientUnits="userSpaceOnUse" x1="400.0" y1="197.0" x2="397.0" y2="210.0"><stop offset="0" stop-color="#7e2d2d"/><stop offset="0.4" stop-color="#8c2f2f"/><stop offset="1" stop-color="#912f2f"/></linearGradient>
<polygon points="399.2,196.8 599.9,224.7 592.7,238.6 393.5,208.6" fill="url(#gC)" />
<polyline points="399.2,196.6 616.0,225.9" fill="none" stroke="#582828" stroke-width="1.3"/>
<polyline points="436.3,171.0 636.9,199.4" fill="none" stroke="#5c2929" stroke-width="1.1"/>
<linearGradient id="gW" gradientUnits="userSpaceOnUse" x1="383.5" y1="0.0" x2="592.0" y2="0.0"><stop offset="0" stop-color="#6c2c2c"/><stop offset="0.035" stop-color="#a03232"/><stop offset="0.06" stop-color="#a53333"/><stop offset="0.94" stop-color="#a33333"/><stop offset="0.975" stop-color="#a63333"/><stop offset="1" stop-color="#6e2c2c"/></linearGradient>
<path d="M386,209.6 L393.5,208.6 L592.7,238.6 L585,240.5 Q586,246 581,250 L394.4,225.8 Q385.5,224.5 383.5,220 Q382.8,212.5 386,209.6 Z" fill="url(#gW)"/>
<polyline points="318.8,205.8 372.5,167.1 372.5,167.1 374.8,165.8 378.0,164.8 381.9,164.1 386.2,163.8 390.6,163.8 394.8,164.2 398.5,165.0 401.4,166.0 403.5,167.3 404.4,168.7 404.2,170.2 402.9,171.6" fill="none" stroke="#d9b8b8" stroke-width="0.8" stroke-dasharray="3 1" opacity="0.5"/>
<polyline points="382.8,214.0 383.2,220.0 386.0,223.6 394.4,226.0 579.0,252.6 585.0,250.0 653.0,198.6 654.5,194.0" fill="none" stroke="#d9b8b8" stroke-width="0.8" stroke-dasharray="3 1" opacity="0.5"/>
<polyline points="267.7,236.2 578.0,282.0 578.5,282.0 582.8,282.5 587.3,282.5 591.6,282.1 595.6,281.4 598.8,280.4 601.2,279.2 719.1,194.1" fill="none" stroke="#d9b8b8" stroke-width="0.8" stroke-dasharray="3 1" opacity="0.5"/>
<polygon points="250.5,212.3 595.2,263.2 728.2,167.2 383.5,116.3" fill="none" stroke="#a000a8" stroke-width="1"/>
<polyline points="250.5,212.3 250.5,260.0 595.2,310.9 728.2,214.9 728.2,167.2" fill="none" stroke="#a000a8" stroke-width="1"/>
<polyline points="595.2,263.2 595.2,310.9" fill="none" stroke="#a000a8" stroke-width="1"/>
<polyline points="383.5,116.3 383.5,136.3" fill="none" stroke="#a000a8" stroke-width="1"/>
<polyline points="488.9,80.0 489.8,203.0" fill="none" stroke="#0000ff" stroke-width="1.2"/>
</svg><!--/VIEW--></div>
<div id="hsplit" class="abs"></div>
<div id="info" class="abs">
 <div class="hd"></div>
 <span class="t" style="left:1.5px;top:1.7px;color:#fff;letter-spacing:-0.13px">Selected Objects Extrema:</span>
 <span class="t" style="left:1.4px;top:14.7px;letter-spacing:-0.02px">Min : -60,-50.0000002185569,0</span>
 <span class="t" style="left:1.4px;top:27.7px;letter-spacing:-0.10px">Max : 60,50.0000002185569,15.0000034969109</span>
 <span class="t" style="left:1.4px;top:40.7px;letter-spacing:0.01px">Width (X) : 120</span>
 <span class="t" style="left:1.4px;top:53.7px;letter-spacing:-0.07px">Height (Y) : 100.000000437114</span>
 <span class="t" style="left:1.4px;top:66.7px;letter-spacing:-0.04px">Depth (Z) 15.0000034969109</span>
</div>
<!-- STATUS -->
<div id="status" class="abs">
 <div class="sp" style="left:0;width:388px;border-left:none"></div>
 <div class="sp" style="left:390px;width:198px"></div>
 <div class="sp" style="left:590px;width:148px"></div>
 <span class="t" style="right:19.9px;top:5.5px;font-size:11.8px;letter-spacing:-0.47px">31.0000, -124.0000</span>
 <svg class="abs" style="left:740px;top:6px" width="13" height="13" viewBox="0 0 13 13"><path d="M12,1L1,12M12,5L5,12M12,9L9,12" stroke="#b8b4a2" stroke-width="1.4"/><path d="M12.6,2L2,12.6M12.6,6L6,12.6M12.6,10L10,12.6" stroke="#fff" stroke-width="0.8"/></svg>
</div>
<div id="bborder" class="abs"></div>
<div id="rborder" class="abs"></div>
</body>
</html>
